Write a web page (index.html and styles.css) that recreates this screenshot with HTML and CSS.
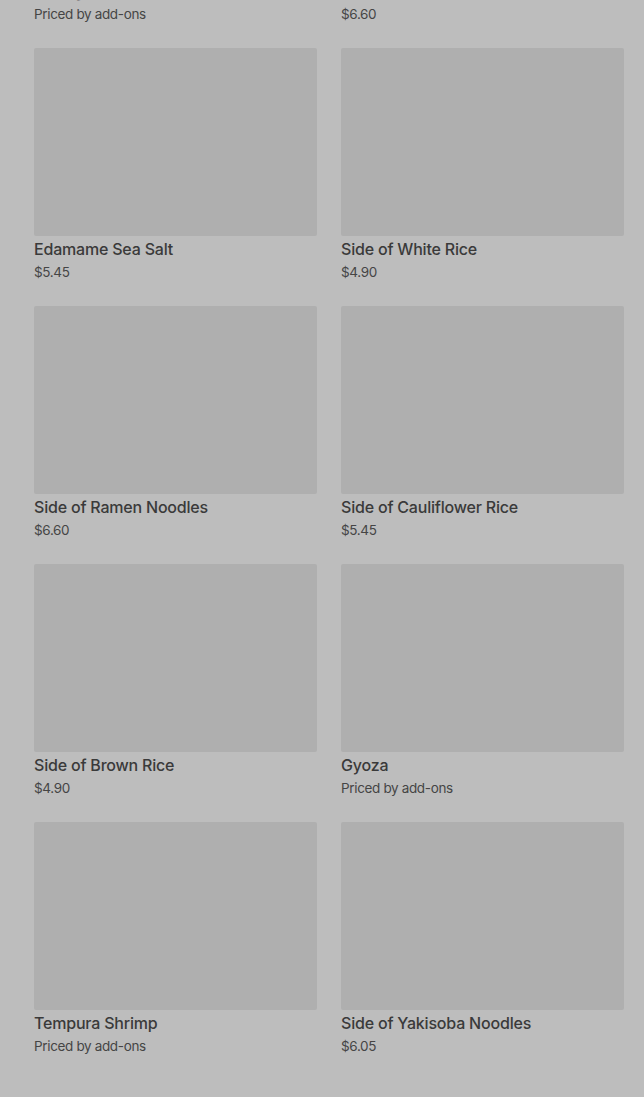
FILE: index.html
```html
<!DOCTYPE html>
<html lang="en">
<head>
  <meta charset="UTF-8">
  <title>Menu</title>
  <link rel="stylesheet" href="styles.css">
</head>
<body>
<div class="menu">
  <div class="item"><div class="photo"></div><h3>Spring Rolls</h3><p>Priced by add-ons</p></div>
  <div class="item"><div class="photo"></div><h3>Miso Soup</h3><p>$6.60</p></div>
  <div class="item"><div class="photo"></div><h3>Edamame Sea Salt</h3><p>$5.45</p></div>
  <div class="item"><div class="photo"></div><h3>Side of White Rice</h3><p>$4.90</p></div>
  <div class="item"><div class="photo"></div><h3>Side of Ramen Noodles</h3><p>$6.60</p></div>
  <div class="item"><div class="photo"></div><h3>Side of Cauliflower Rice</h3><p>$5.45</p></div>
  <div class="item"><div class="photo"></div><h3>Side of Brown Rice</h3><p>$4.90</p></div>
  <div class="item"><div class="photo"></div><h3>Gyoza</h3><p>Priced by add-ons</p></div>
  <div class="item"><div class="photo"></div><h3>Tempura Shrimp</h3><p>Priced by add-ons</p></div>
  <div class="item"><div class="photo"></div><h3>Side of Yakisoba Noodles</h3><p>$6.05</p></div>
</div>
</body>
</html>
```

FILE: styles.css
```css
html, body { background: #bdbdbd; }
body { margin: 0; font-family: Inter, "Noto Sans", sans-serif; color: #3a3a3a; overflow: hidden; }
.menu { display: grid; grid-template-columns: 1fr 1fr; column-gap: 24px; row-gap: 24px; padding: 0 20px 17px 34px; margin-top: -210px; }
.photo { height: 188px; background: #afafaf; border-radius: 2px; }
.item h3 { margin: 1px 0 0; font-size: 16px; font-weight: 500; line-height: 24px; letter-spacing: -0.2px; }
.item p { margin: 1px 0 0; font-size: 13.5px; line-height: 20px; color: #454545; letter-spacing: -0.35px; }
```
